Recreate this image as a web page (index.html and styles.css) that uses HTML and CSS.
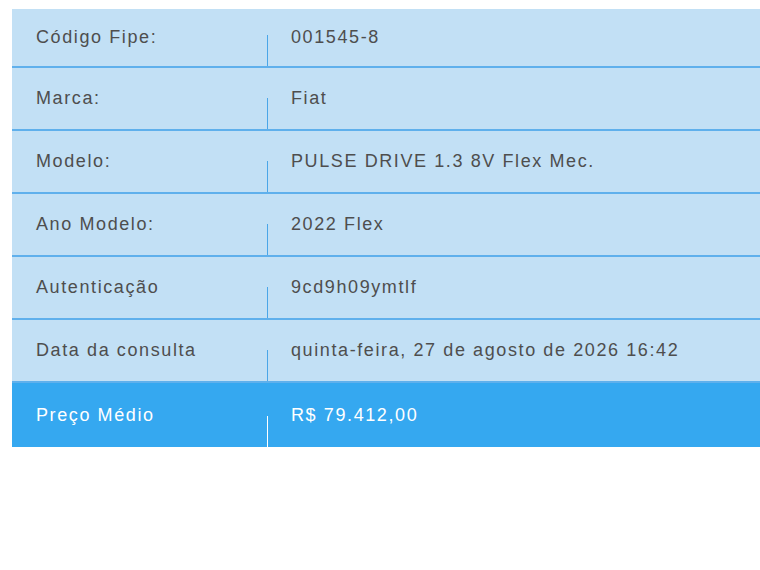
FILE: index.html
```html
<!DOCTYPE html>
<html lang="pt-BR">
<head>
<meta charset="utf-8">
<title>Tabela Fipe</title>
<link rel="stylesheet" href="styles.css">
</head>
<body>
<div class="fipe-table">
  <div class="row first">
    <div class="label">Código Fipe:</div>
    <div class="divider"></div>
    <div class="value">001545-8</div>
  </div>
  <div class="row">
    <div class="label">Marca:</div>
    <div class="divider"></div>
    <div class="value">Fiat</div>
  </div>
  <div class="row">
    <div class="label">Modelo:</div>
    <div class="divider"></div>
    <div class="value">PULSE DRIVE 1.3 8V Flex Mec.</div>
  </div>
  <div class="row">
    <div class="label">Ano Modelo:</div>
    <div class="divider"></div>
    <div class="value">2022 Flex</div>
  </div>
  <div class="row">
    <div class="label">Autenticação</div>
    <div class="divider"></div>
    <div class="value">9cd9h09ymtlf</div>
  </div>
  <div class="row">
    <div class="label">Data da consulta</div>
    <div class="divider"></div>
    <div class="value">quinta-feira, 27 de agosto de 2026 16:42</div>
  </div>
  <div class="row price">
    <div class="label">Preço Médio</div>
    <div class="divider"></div>
    <div class="value">R$ 79.412,00</div>
  </div>
</div>
</body>
</html>
```

FILE: styles.css
```css
html, body {
  margin: 0;
  background: #ffffff;
}

body {
  padding: 9px 0 0 12px;
  font-family: "Liberation Sans", Arial, sans-serif;
  font-size: 18px;
  letter-spacing: 1.6px;
  color: #4e4e4e;
}

.fipe-table {
  display: flex;
  flex-direction: column;
}

.row {
  display: grid;
  grid-template-columns: 255px 1px 1fr;
  height: 61px;
  background: #c2e0f5;
  border-bottom: 2px solid #5fb0ec;
}

.row.first {
  height: 57px;
}

.label {
  padding-left: 24px;
  align-self: center;
}

.value {
  padding-left: 23px;
  align-self: center;
}

.divider {
  align-self: end;
  height: 31px;
  background: #4aa6e8;
}

.row.price {
  height: 64px;
  background: #35a8f0;
  border-bottom: none;
  color: #ffffff;
}

.row.price .divider {
  background: #ffffff;
}
```
